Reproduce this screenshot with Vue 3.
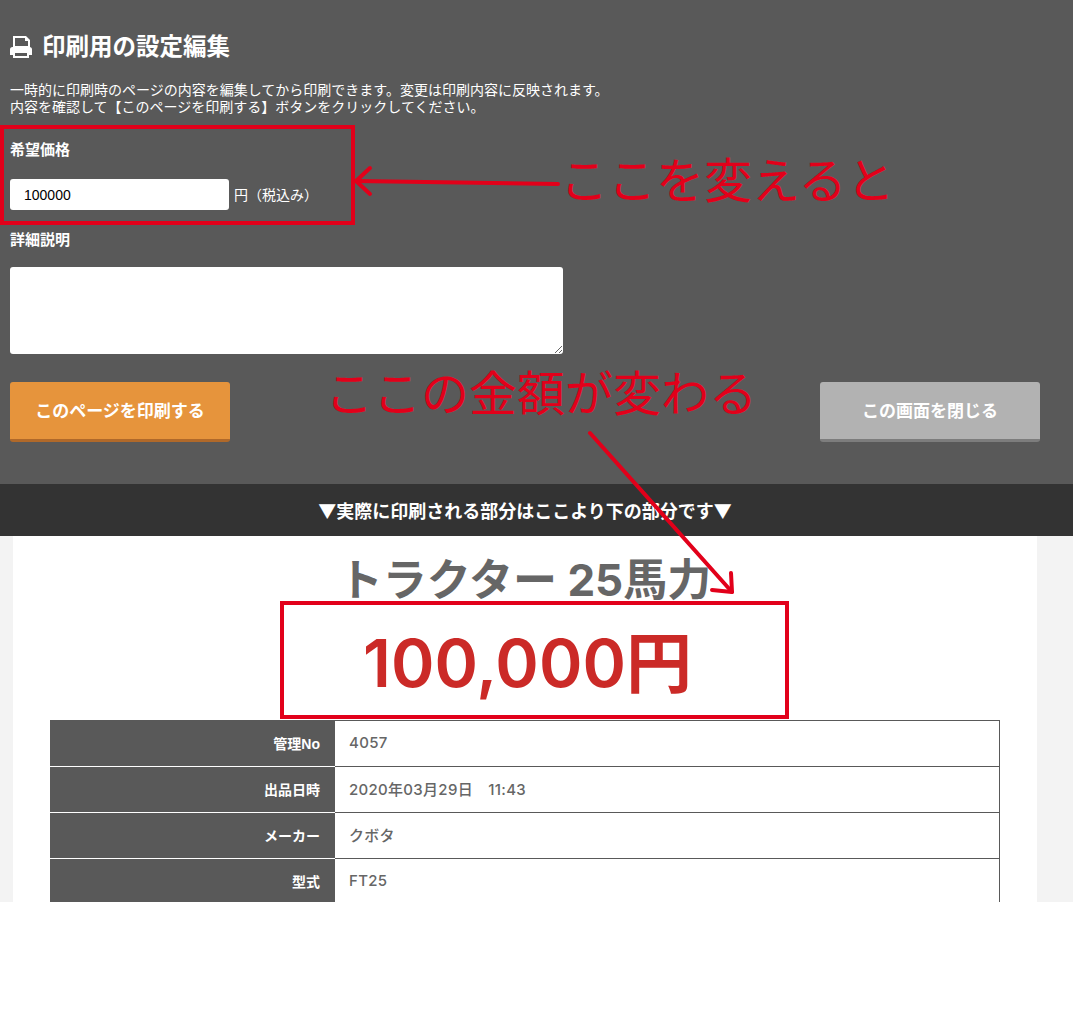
<script setup>
const rows = [
  { k: '管理No', v: '4057' },
  { k: '出品日時', v: '2020年03月29日　11:43' },
  { k: 'メーカー', v: 'クボタ' },
  { k: '型式', v: 'FT25' }
]
</script>

<template>
  <div class="page">
    <section class="panel">
      <h2 class="title">
        <svg class="printer" viewBox="1 1 22 22" width="22" height="22">
          <path fill="#fff" fill-rule="evenodd" d="M4 1h13l4 4v8H4z M6 3v8h13V6h-3V3z"/>
          <path fill="#fff" d="M3.500 12h17A2.500 2.500 0 0 1 23 14.500V20H1v-5.500A2.500 2.500 0 0 1 3.500 12z"/>
          <rect x="5" y="17" width="14" height="5" fill="#595959" stroke="#fff" stroke-width="2"/>
        </svg>
        <span>印刷用の設定編集</span>
      </h2>
      <p class="lead">一時的に印刷時のページの内容を編集してから印刷できます。変更は印刷内容に反映されます。<br>内容を確認して【このページを印刷する】ボタンをクリックしてください。</p>
      <div class="label first">希望価格</div>
      <div class="price-row">
        <input class="price-input" type="text" value="100000">
        <span class="unit">円（税込み）</span>
      </div>
      <div class="label second">詳細説明</div>
      <textarea class="desc"></textarea>
      <div class="buttons">
        <button class="btn print">このページを印刷する</button>
        <button class="btn close">この画面を閉じる</button>
      </div>
    </section>
    <div class="notice">▼実際に印刷される部分はここより下の部分です▼</div>
    <main class="sheet-wrap">
      <div class="sheet">
        <h1 class="name">トラクター 25馬力</h1>
        <div class="amount">100,000円</div>
        <table class="spec">
          <tbody>
            <tr v-for="r in rows" :key="r.k">
              <th>{{ r.k }}</th>
              <td>{{ r.v }}</td>
            </tr>
          </tbody>
        </table>
      </div>
    </main>

    <div class="box box-a"></div>
    <div class="box box-b"></div>
    <span class="note note-a">ここを変えると</span>
    <span class="note note-b">ここの金額が変わる</span>
    <svg class="arrows" width="1073" height="1024" viewBox="0 0 1073 1024">
      <g fill="none" stroke="#e2001a" stroke-width="4" stroke-linecap="round" stroke-linejoin="round">
        <path d="M558 184 L356 181"/>
        <path d="M370 168 L356 181 L370 194"/>
        <path d="M590 433 L732 592"/>
        <path d="M712 590 L732 592 L731 573"/>
      </g>
    </svg>
  </div>
</template>

<style>
html, body { margin: 0; background: #fff; }
</style>

<style scoped>
.page {
  position: relative;
  width: 1073px;
  height: 1024px;
  overflow: hidden;
  background: #fff;
  font-family: "Liberation Sans", "Noto Sans CJK JP", sans-serif;
}
.panel {
  box-sizing: border-box;
  height: 484px;
  padding: 33px 33px 0 10px;
  background: #595959;
  color: #fff;
}
.title {
  display: flex;
  align-items: center;
  gap: 10px;
  margin: 0;
  height: 28px;
  font-size: 23.500px;
  line-height: 28px;
  font-weight: 700;
}
.printer { flex: none; }
.lead {
  margin: 21px 0 0;
  font-size: 14px;
  line-height: 17px;
}
.label {
  font-size: 15px;
  line-height: 20px;
  font-weight: 700;
}
.first { margin-top: 24px; }
.second { margin-top: 20px; }
.price-row {
  display: flex;
  align-items: center;
  gap: 5px;
  margin-top: 19px;
}
.price-input {
  box-sizing: border-box;
  width: 219px;
  height: 31px;
  padding: 0 14px;
  border: 0;
  border-radius: 3px;
  background: #fff;
  color: #000;
  font: 14px "Liberation Sans", sans-serif;
}
.unit { font-size: 14px; line-height: 20px; }
.desc {
  display: block;
  box-sizing: border-box;
  width: 553px;
  height: 87px;
  margin-top: 17px;
  border: 0;
  border-radius: 3px;
  background: #fff;
}
.buttons {
  display: flex;
  justify-content: space-between;
  margin-top: 28px;
}
.btn {
  width: 220px;
  height: 60px;
  padding: 0 0 3px;
  border: 0;
  border-radius: 3px;
  color: #fff;
  font-family: inherit;
  font-size: 17px;
  font-weight: 700;
}
.print { background: #e6943c; border-bottom: 3px solid #b0692a; }
.close { background: #b2b2b2; border-bottom: 3px solid #7d7d7d; }
.notice {
  box-sizing: border-box;
  height: 52px;
  padding-right: 23px;
  background: #333;
  color: #fff;
  text-align: center;
  font-family: "Noto Sans CJK JP", sans-serif;
  font-size: 18px;
  line-height: 52px;
  font-weight: 700;
}
.sheet-wrap {
  box-sizing: border-box;
  height: 366px;
  padding: 0 36px 0 13px;
  background: #f3f3f3;
  overflow: hidden;
}
.sheet {
  box-sizing: border-box;
  height: 100%;
  padding: 0 37px;
  background: #fff;
  color: #666;
}
.name {
  margin: 0;
  padding-top: 16px;
  height: 62px;
  box-sizing: border-box;
  text-align: center;
  font-family: Inter, "Noto Sans CJK JP", sans-serif;
  font-size: 44px;
  line-height: 56px;
  font-weight: 700;
  color: #666;
}
.amount {
  height: 122px;
  box-sizing: border-box;
  padding-top: 19px;
  text-align: center;
  color: #cb2a27;
  font-family: Inter, "Noto Sans CJK JP", sans-serif;
  font-size: 66px;
  line-height: 92px;
  font-weight: 600;
  margin-left: 5px;
}
.spec {
  width: 950px;
  border-collapse: collapse;
  table-layout: fixed;
}
.spec th, .spec td {
  box-sizing: border-box;
  height: 46px;
  padding: 0 14px 2px;
  font-size: 15px;
  font-weight: 700;
}
.spec th {
  width: 284px;
  padding-right: 14px;
  text-align: right;
  background: #595959;
  color: #fff;
  font-size: 14px;
  border: 1px solid #595959;
  border-bottom-color: #fff;
}
.spec td {
  text-align: left;
  color: #666;
  background: #fff;
  font-family: Inter, "Noto Sans CJK JP", sans-serif;
  font-weight: 500;
  letter-spacing: 0.3px;
  border: 1px solid #595959;
}
.box {
  position: absolute;
  box-sizing: border-box;
  border: 4px solid #e2001a;
}
.box-a { left: 0; top: 125px; width: 355px; height: 100px; }
.box-b { left: 280px; top: 601px; width: 509px; height: 118px; }
.note {
  position: absolute;
  color: #e2001a;
  font-size: 48px;
  line-height: 60px;
  white-space: nowrap;
}
.note-a { left: 560px; top: 152px; }
.note-b { left: 325px; top: 365px; }
.arrows {
  position: absolute;
  left: 0;
  top: 0;
  pointer-events: none;
}
</style>
